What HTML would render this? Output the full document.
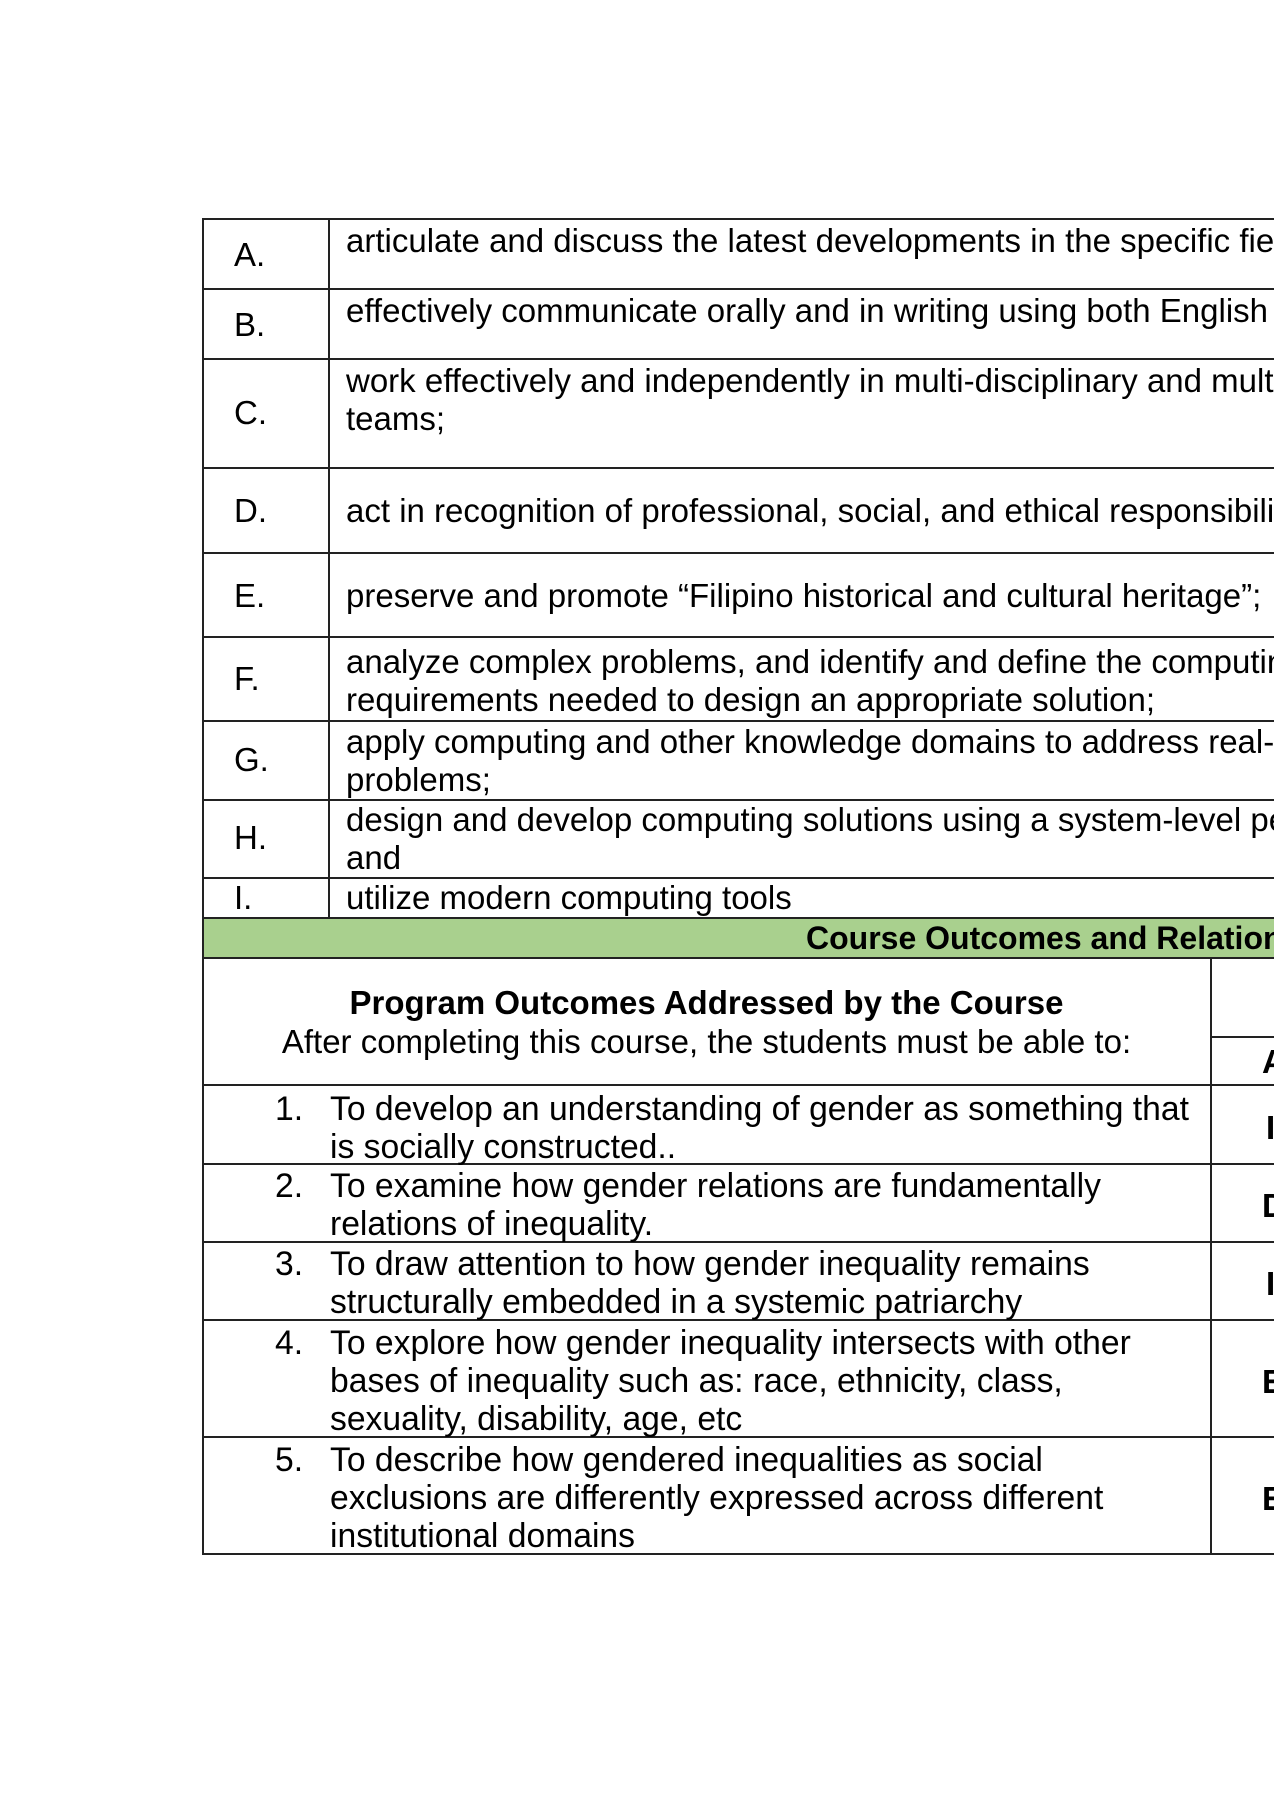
<!DOCTYPE html>
<html><head><meta charset="utf-8"><style>
html,body{margin:0;padding:0;background:#fff;width:1274px;height:1800px;overflow:hidden;position:relative;font-family:"Liberation Sans",Arial,sans-serif;color:#000}
#w{position:absolute;left:0;top:0;width:1274px;height:1800px;overflow:hidden}
.t{position:absolute;white-space:nowrap;font-size:33px;line-height:38px}
.c{position:absolute;white-space:nowrap;font-size:34px;line-height:38px;transform:scaleX(0.99);transform-origin:left top}
.b{font-weight:bold}
.h{position:absolute;height:2px;background:#222}
.v{position:absolute;width:2px;background:#222}
</style></head><body><div id="w">
<div style="position:absolute;left:202px;top:919px;width:1080px;height:39px;background:#a9d08e"></div>
<div class="h" style="left:202px;top:218px;width:1080px"></div>
<div class="h" style="left:202px;top:288px;width:1080px"></div>
<div class="h" style="left:202px;top:358px;width:1080px"></div>
<div class="h" style="left:202px;top:467px;width:1080px"></div>
<div class="h" style="left:202px;top:552px;width:1080px"></div>
<div class="h" style="left:202px;top:636px;width:1080px"></div>
<div class="h" style="left:202px;top:720px;width:1080px"></div>
<div class="h" style="left:202px;top:799px;width:1080px"></div>
<div class="h" style="left:202px;top:877px;width:1080px"></div>
<div class="h" style="left:202px;top:917px;width:1080px"></div>
<div class="h" style="left:202px;top:957px;width:1080px"></div>
<div class="h" style="left:1211px;top:1036px;width:70px"></div>
<div class="h" style="left:202px;top:1084px;width:1080px"></div>
<div class="h" style="left:202px;top:1163px;width:1080px"></div>
<div class="h" style="left:202px;top:1241px;width:1080px"></div>
<div class="h" style="left:202px;top:1319px;width:1080px"></div>
<div class="h" style="left:202px;top:1436px;width:1080px"></div>
<div class="h" style="left:202px;top:1553px;width:1080px"></div>
<div class="v" style="left:202px;top:218px;height:1337px"></div>
<div class="v" style="left:328px;top:218px;height:701px"></div>
<div class="v" style="left:1210px;top:957px;height:598px"></div>

<div class="t" style="left:234px;top:236px">A.</div>
<div class="t" style="left:346px;top:222px">articulate and discuss the latest developments in the specific field</div>
<div class="t" style="left:234px;top:306px">B.</div>
<div class="t" style="left:346px;top:292px">effectively communicate orally and in writing using both English</div>
<div class="t" style="left:234px;top:394px">C.</div>
<div class="t" style="left:346px;top:362px">work effectively and independently in multi-disciplinary and multi-<br>teams;</div>
<div class="t" style="left:234px;top:492px">D.</div>
<div class="t" style="left:346px;top:492px">act in recognition of professional, social, and ethical responsibility;</div>
<div class="t" style="left:234px;top:577px">E.</div>
<div class="t" style="left:346px;top:577px">preserve and promote “Filipino historical and cultural heritage”;</div>
<div class="t" style="left:234px;top:660px">F.</div>
<div class="t" style="left:346px;top:643px">analyze complex problems, and identify and define the computing<br>requirements needed to design an appropriate solution;</div>
<div class="t" style="left:234px;top:741px">G.</div>
<div class="t" style="left:346px;top:723px">apply computing and other knowledge domains to address real-world<br>problems;</div>
<div class="t" style="left:234px;top:819px">H.</div>
<div class="t" style="left:346px;top:801px">design and develop computing solutions using a system-level perspective;<br>and</div>
<div class="t" style="left:234px;top:879px">I.</div>
<div class="t" style="left:346px;top:879px">utilize modern computing tools</div>
<div class="t b" style="left:806px;top:919px;font-size:32px">Course Outcomes and Relationship to Program Outcomes</div>

<div class="t b" style="left:202px;width:1009px;text-align:center;top:984px">Program Outcomes Addressed by the Course</div>
<div class="t" style="left:202px;width:1009px;text-align:center;top:1023px">After completing this course, the students must be able to:</div>
<div class="t b" style="left:1262px;top:1043px">A</div>

<div class="c" style="left:275px;top:1090px">1.</div>
<div class="c" style="left:330px;top:1090px">To develop an understanding of gender as something that<br>is socially constructed..</div>
<div class="c" style="left:275px;top:1167px">2.</div>
<div class="c" style="left:330px;top:1167px">To examine how gender relations are fundamentally<br>relations of inequality.</div>
<div class="c" style="left:275px;top:1245px">3.</div>
<div class="c" style="left:330px;top:1245px">To draw attention to how gender inequality remains<br>structurally embedded in a systemic patriarchy</div>
<div class="c" style="left:275px;top:1324px">4.</div>
<div class="c" style="left:330px;top:1324px">To explore how gender inequality intersects with other<br>bases of inequality such as: race, ethnicity, class,<br>sexuality, disability, age, etc</div>
<div class="c" style="left:275px;top:1441px">5.</div>
<div class="c" style="left:330px;top:1441px">To describe how gendered inequalities as social<br>exclusions are differently expressed across different<br>institutional domains</div>

<div class="t b" style="left:1266px;top:1109px">I</div>
<div class="t b" style="left:1262px;top:1187px">D</div>
<div class="t b" style="left:1266px;top:1265px">I</div>
<div class="t b" style="left:1262px;top:1363px">E</div>
<div class="t b" style="left:1262px;top:1480px">E</div>
</div></body></html>
